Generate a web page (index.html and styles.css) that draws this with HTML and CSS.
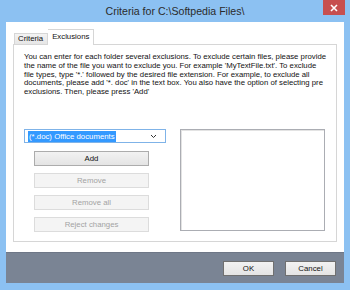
FILE: index.html
```html
<!DOCTYPE html>
<html lang="en">
<head>
  <meta charset="UTF-8" />
  <title>Criteria for C:\Softpedia Files\</title>
  <link rel="stylesheet" href="styles.css">
</head>
<body>

  <div class="window">
    <!-- Title bar -->
    <div class="titlebar">
      <span></span>
      <span class="title">Criteria for C:\Softpedia Files\</span>
      <span class="close">
        <svg width="8" height="8" viewBox="0 0 8 8"><path d="M1 1L7 7M7 1L1 7" stroke="#fff" stroke-width="1.6"/></svg>
      </span>
    </div>

    <div class="client">
      <div class="tabs">
        <span class="tab">Criteria</span>
        <span class="tab active">Exclusions</span>
      </div>

      <div class="panel">
        <p class="intro">
          You can enter for each folder several exclusions. To exclude certain files, please provide<br>
          the name of the file you want to exclude you. For example 'MyTextFile.txt'. To exclude<br>
          file types, type '*.' followed by the desired file extension. For example, to exclude all<br>
          documents, please add '*. doc' in the text box. You also have the option of selecting pre<br>
          exclusions. Then, please press 'Add'
        </p>

        <div class="editor">
          <div class="left">
            <div class="combo">
              <span class="selected">(*.doc) Office documents</span>
              <svg class="arrow" width="7" height="5" viewBox="0 0 7 5"><path d="M1 1L3.5 3.5L6 1" stroke="#333" stroke-width="1" fill="none"/></svg>
            </div>
            <button class="btn">Add</button>
            <button class="btn" disabled>Remove</button>
            <button class="btn" disabled>Remove all</button>
            <button class="btn" disabled>Reject changes</button>
          </div>
          <div class="listbox"></div>
        </div>
      </div>
    </div>

    <div class="footer">
      <button class="btn wide">OK</button>
      <button class="btn wide">Cancel</button>
    </div>
  </div>

</body>
</html>
```

FILE: styles.css
```css
:root {
  --frame: #8cc1f2;
  --footer: #7a8494;
  --border: #d6d6d6;
  --text: #111;
  --muted: #a3a3a3;
}

* {
  margin: 0;
  padding: 0;
  box-sizing: border-box;
}

body {
  width: 350px;
  height: 290px;
  overflow: hidden;
  background: var(--frame);
  font-family: 'Liberation Sans', Arial, sans-serif;
  color: var(--text);
}

.window {
  padding: 0 6px 7px;
}

.titlebar {
  height: 22px;
  margin: 0 -6px;
  display: grid;
  grid-template-columns: 1fr auto 1fr;
  align-items: start;
}

.title {
  font-size: 10.6px;
  line-height: 23px;
  color: #2b2b2b;
}

.close {
  justify-self: end;
  margin-right: 5px;
  width: 22px;
  height: 15px;
  background: #c74f4f;
  display: flex;
  align-items: center;
  justify-content: center;
}

.client {
  height: 230px;
  background: #fff;
  padding: 7px 7px 0;
}

.tabs {
  display: flex;
  align-items: flex-end;
  height: 15px;
  padding-left: 1px;
  font-size: 7.8px;
}

.tab {
  height: 11px;
  padding: 0 4px 0 3px;
  line-height: 10px;
  white-space: nowrap;
  background: linear-gradient(#f3f3f3, #e6e6e6);
  border: 1px solid var(--border);
  border-bottom: none;
}

.tab.active {
  height: 16px;
  margin-bottom: -1px;
  padding: 0 4px;
  line-height: 14px;
  background: #fff;
  border-left: none;
  position: relative;
}

.panel {
  height: 198px;
  border: 1px solid var(--border);
  padding: 8px 10px 0 10px;
}

.intro {
  font-size: 7.75px;
  line-height: 8.8px;
  white-space: nowrap;
  height: 76px;
}

.editor {
  display: flex;
  gap: 14px;
}

.left {
  width: 142px;
  display: flex;
  flex-direction: column;
  gap: 7px;
}

.combo {
  height: 14px;
  border: 1px solid #7fb3e8;
  display: flex;
  align-items: center;
  padding: 0 4px 0 3px;
  margin-bottom: 1px;
  font-size: 7.8px;
}

.selected {
  background: #3399ff;
  color: #fff;
  padding: 1px 1px;
  line-height: 9px;
}

.arrow {
  margin-left: auto;
  margin-right: 4px;
}

.btn {
  font-family: inherit;
  font-size: 7.8px;
  color: var(--text);
  height: 15px;
  width: 115px;
  margin-left: 10px;
  background: linear-gradient(#f2f2f2, #e4e4e4);
  border: 1px solid #acacac;
}

.btn:disabled {
  background: #f4f4f4;
  border-color: #dcdcdc;
  color: var(--muted);
}

.listbox {
  width: 145px;
  height: 102px;
  border: 1px solid #abadb3;
  box-shadow: inset 1px 1px 0 #e3e3e3;
}

.footer {
  height: 31px;
  background: var(--footer);
  border-top: 1px solid #6e7787;
  display: flex;
  justify-content: flex-end;
  gap: 11px;
  padding: 8px 8px 0 0;
}

.btn.wide {
  width: 51px;
  margin-left: 0;
  border-color: #707070;
}
```
